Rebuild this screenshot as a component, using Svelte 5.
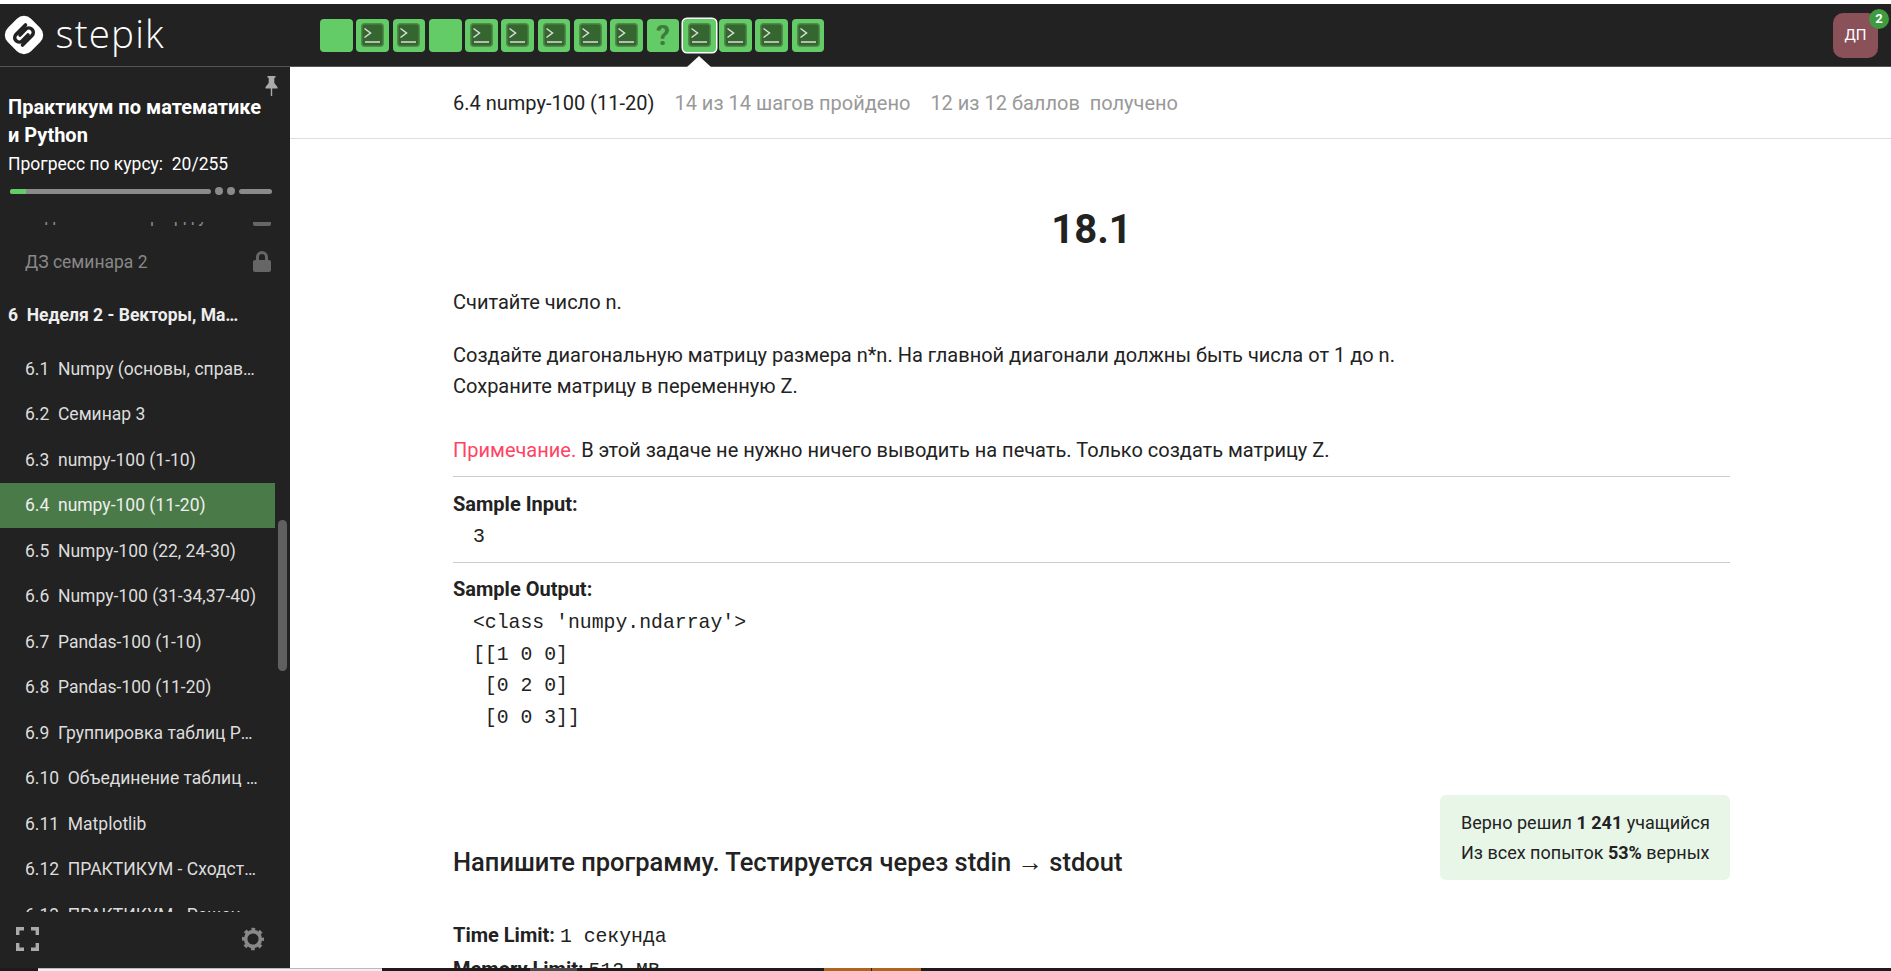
<script>
  const tabs = ['e','t','t','e','t','t','t','t','t','q','s','t','t','t'];
  const items = [
    '6.1  Numpy (основы, справочник по функциям',
    '6.2  Семинар 3',
    '6.3  numpy-100 (1-10)',
    '6.4  numpy-100 (11-20)',
    '6.5  Numpy-100 (22, 24-30)',
    '6.6  Numpy-100 (31-34,37-40)',
    '6.7  Pandas-100 (1-10)',
    '6.8  Pandas-100 (11-20)',
    '6.9  Группировка таблиц Pandas и другое',
    '6.10  Объединение таблиц и другие функции',
    '6.11  Matplotlib',
    '6.12  ПРАКТИКУМ - Сходство текстов и другое',
    '6.13  ПРАКТИКУМ - Решение задач и другое'
  ];
</script>

<div class="page">
  <div class="strip"></div>
  <header class="topbar">
    <div class="logo">
      <svg width="42" height="42" viewBox="0 0 42 42">
        <rect x="4.5" y="4.5" width="33" height="33" rx="10" transform="rotate(45 21 21)" fill="#fff"/>
        <g fill="none" stroke="#222" stroke-width="3.6" stroke-linecap="round">
          <path d="M22.5 11 L13 20.5 a4.4 4.4 0 0 0 6.4 6.2 L25 21"/>
          <path d="M19.5 31 L29 21.5 a4.4 4.4 0 0 0 -6.4 -6.2 L17 21"/>
        </g>
      </svg>
      <span class="logotext">stepik</span>
    </div>
    <div class="tabs">
      {#each tabs as t}
        <div class="tab" class:sel={t === 's'}>
          {#if t === 't' || t === 's'}
            <svg width="23" height="24" viewBox="0 0 23 24">
              <rect x="0.75" y="0.75" width="21.5" height="22.5" rx="3" fill="#35662f" stroke="#4f8b49" stroke-width="1.5"/>
              <path d="M3.5 5.5 L9.5 10 L3.5 14.5" fill="none" stroke="#dcdcdc" stroke-width="1.5"/>
              <path d="M4 19 H19" stroke="#dcdcdc" stroke-width="1.5"/>
            </svg>
          {:else if t === 'q'}
            <span class="q">?</span>
          {/if}
        </div>
      {/each}
    </div>
    <div class="caret"></div>
    <div class="avatar">ДП<span class="badge">2</span></div>
  </header>

  <div class="body">
    <aside class="side">
      <svg class="pin" width="13" height="20" viewBox="0 0 13 20">
        <path d="M2.5 0 H10.5 V1.8 H9.3 V7 L12.5 11 V12.5 H7.2 V20 H5.8 V12.5 H0.5 V11 L3.7 7 V1.8 H2.5 Z" fill="#aaa"/>
      </svg>
      <div class="course">
        <div class="ctitle">Практикум по математике и Python</div>
        <div class="cprog">Прогресс по курсу:&nbsp; 20/255</div>
        <div class="pbar">
          <div class="seg long"><div class="done"></div></div>
          <div class="dot"></div>
          <div class="dot"></div>
          <div class="seg short"></div>
        </div>
      </div>
      <div class="scroll">
        <div class="list">
          <div class="item locked ghost"><span class="txt">Задачи семинара рд у</span>
            <svg class="lock" width="18" height="21" viewBox="0 0 18 21"><path d="M3 9 V6 a6 6 0 0 1 12 0 V9 h1 a2 2 0 0 1 2 2 v8 a2 2 0 0 1 -2 2 H2 a2 2 0 0 1 -2 -2 v-8 a2 2 0 0 1 2 -2 Z M6 9 h6 V6 a3 3 0 0 0 -6 0 Z" fill="#666" fill-rule="evenodd"/></svg>
          </div>
          <div class="item locked"><span class="txt">ДЗ семинара 2</span>
            <svg class="lock" width="18" height="21" viewBox="0 0 18 21"><path d="M3 9 V6 a6 6 0 0 1 12 0 V9 h1 a2 2 0 0 1 2 2 v8 a2 2 0 0 1 -2 2 H2 a2 2 0 0 1 -2 -2 v-8 a2 2 0 0 1 2 -2 Z M6 9 h6 V6 a3 3 0 0 0 -6 0 Z" fill="#666" fill-rule="evenodd"/></svg>
          </div>
          <div class="item section"><span class="txt">6  Неделя 2 - Векторы, Матрицы и другое</span></div>
          {#each items as it, i}
            <div class="item" class:active={i === 3}><span class="txt">{it}</span></div>
          {/each}
        </div>
        <div class="thumb"></div>
      </div>
      <div class="sfoot">
        <svg width="23" height="24" viewBox="0 0 23 24" fill="none" stroke="#aaa" stroke-width="3.4">
          <path d="M1.7 8 V1.7 H8 M15 1.7 H21.3 V8 M21.3 16 V22.3 H15 M8 22.3 H1.7 V16"/>
        </svg>
        <svg width="22" height="24" viewBox="0 0 22 24" fill="none" stroke="#888">
          <circle cx="11" cy="12" r="7.4" stroke-width="3.6"/>
          <circle cx="11" cy="12" r="9.6" stroke-width="3.4" stroke-dasharray="3.6 3.94" stroke-dashoffset="1.8"/>
        </svg>
      </div>
    </aside>

    <main class="main">
      <div class="lesson">
        <span class="ltitle">6.4 numpy-100 (11-20)</span>
        <span class="lmeta">14 из 14 шагов пройдено</span>
        <span class="lmeta">12 из 12 баллов&nbsp; получено</span>
      </div>
      <article class="step">
        <h1>18.1</h1>
        <p class="p1">Считайте число n.</p>
        <p class="p2">Создайте диагональную матрицу размера n*n. На главной диагонали должны быть числа от 1 до n.<br>Сохраните матрицу в переменную Z.</p>
        <p class="p3"><span class="note">Примечание.</span> В этой задаче не нужно ничего выводить на печать. Только создать матрицу Z.</p>
        <div class="sample first">
          <div class="stitle">Sample Input:</div>
          <pre>3</pre>
        </div>
        <div class="sample">
          <div class="stitle">Sample Output:</div>
          <pre>&lt;class 'numpy.ndarray'&gt;
[[1 0 0]
 [0 2 0]
 [0 0 3]]</pre>
        </div>
        <div class="taskrow">
          <h2>Напишите программу. Тестируется через stdin → stdout</h2>
          <div class="stats">
            <div>Верно решил <b>1 241</b> учащийся</div>
            <div>Из всех попыток <b>53%</b> верных</div>
          </div>
        </div>
        <div class="limits">
          <div><b>Time Limit:</b> <code>1 секунда</code></div>
          <div><b>Memory Limit:</b> <code>512 MB</code></div>
        </div>
      </article>
    </main>
  </div>

  <footer class="taskbar">
    <div class="tb light"></div>
    <div class="tb gap1"></div>
    <div class="tb grey"></div>
    <div class="tb gap2"></div>
    <div class="tb orange"></div>
    <div class="tb orange2"></div>
  </footer>
</div>

<style>
  :global(body) { margin: 0; background: #fff; }
  .page {
    height: 971px; display: flex; flex-direction: column; overflow: hidden;
    font-family: Roboto, "Liberation Sans", sans-serif; color: #222; background: #fff;
  }
  .strip { height: 4px; background: #fff; flex: none; }
  .topbar {
    height: 63px; flex: none; background: #222; display: flex; align-items: center;
    position: relative; box-sizing: border-box; border-bottom: 1px solid #555;
  }
  .logo { width: 320px; flex: none; display: flex; align-items: center; box-sizing: border-box; padding-left: 2.5px; gap: 11px; }
  .logotext { font-family: "Open Sans", sans-serif; font-weight: 300; font-size: 38.5px; color: #fff; line-height: 42px; letter-spacing: 1.2px; margin-top: -5px; }
  .tabs { display: flex; gap: 3.6px; }
  .tab {
    width: 32.7px; height: 33px; background: #64cc66; border-radius: 4px;
    display: flex; align-items: center; justify-content: center; box-sizing: border-box; flex: none;
  }
  .tab.sel { box-shadow: 0 0 0 1.5px #fff; }
  .q { font-size: 28px; font-weight: 700; color: #3e7b3c; line-height: 33px; }
  .caret {
    position: absolute; left: 687px; bottom: -1px; width: 0; height: 0;
    border-left: 12px solid transparent; border-right: 12px solid transparent; border-bottom: 11px solid #fff;
  }
  .avatar {
    position: relative; margin-left: auto; margin-right: 13px; width: 45px; height: 45px; border-radius: 10px;
    background: #8a5159; color: #fff; font-size: 15px; display: flex; align-items: center; justify-content: center;
  }
  .badge {
    position: absolute; right: -11px; top: -4px; width: 20px; height: 20px; border-radius: 50%;
    background: #3f9b3f; color: #fff; font-size: 13px; font-weight: 700; display: flex; align-items: center; justify-content: center;
  }
  .body { flex: 1; display: flex; min-height: 0; }
  .side { width: 290px; flex: none; background: #222; display: flex; flex-direction: column; position: relative; color: #fff; }
  .pin { position: absolute; left: 265px; top: 9px; }
  .course { padding: 26px 20px 0 8px; flex: none; }
  .ctitle { font-size: 20px; font-weight: 700; line-height: 28px; color: #fff; }
  .cprog { font-size: 17.5px; line-height: 28px; color: #fff; padding-top: 1px; white-space: nowrap; }
  .pbar { margin: 10px 0 0 2px; width: 263px; height: 6px; display: flex; align-items: center; gap: 4px; margin-bottom: 27.5px; }
  .seg { background: #8a8a8a; height: 5px; border-radius: 3px; overflow: hidden; }
  .seg.long { width: 201px; }
  .seg.short { width: 33px; }
  .done { width: 16px; height: 100%; background: #64cc66; }
  .dot { width: 8px; height: 8px; border-radius: 50%; background: #8a8a8a; flex: none; }
  .scroll { flex: 1; min-height: 0; position: relative; overflow: hidden; }
  .list { margin-top: -28.15px; }
  .item {
    height: 45.5px; width: 275px; display: flex; align-items: center; box-sizing: border-box; padding-left: 25px;
    font-size: 17.5px; color: #ddd; position: relative;
  }
  .txt { white-space: pre; overflow: hidden; text-overflow: ellipsis; width: 234px; line-height: 24px; }
  .item.active { background: #4a7a48; color: #eee; }
  .item.locked { color: #888; }
  .item.section { padding-left: 8px; font-weight: 700; color: #eee; margin: 8.2px 0; }
  .item.section .txt { width: 233px; }
  .lock { position: absolute; left: 253px; top: 12px; }
  .thumb { position: absolute; left: 278px; top: 298.5px; width: 9px; height: 151px; border-radius: 5px; background: #606060; }
  .sfoot { height: 53px; flex: none; display: flex; justify-content: space-between; align-items: center; padding: 0 26px 3px 15.5px; }
  .main { flex: 1; min-width: 0; background: #fff; overflow: hidden; }
  .lesson {
    height: 72px; box-sizing: border-box; border-bottom: 1px solid #ddd; padding-left: 163px;
    display: flex; align-items: center; gap: 20px; font-size: 20px;
  }
  .ltitle { color: #222; }
  .lmeta { color: #999; }
  .step { width: 1277px; margin-left: 163px; padding-top: 67px; font-size: 20px; }
  h1 { margin: 0 0 33px; text-align: center; font-size: 40px; line-height: 48px; font-weight: 700; color: #222; }
  p { margin: 0; line-height: 31px; }
  .p1 { margin-bottom: 22px; }
  .p2 { margin-bottom: 33px; }
  .p3 { margin-bottom: 10px; }
  .note { color: #ff4363; }
  .sample { border-top: 1px solid #ccc; padding-top: 11px; margin-bottom: 10px; }
  .sample.first { padding-top: 12px; margin-bottom: 8px; }
  .sample.first pre { margin-top: 2px; }
  .sample pre { margin-top: 3.5px; }
  .stitle { font-weight: 700; line-height: 31px; color: #222; font-size: 20px; }
  pre {
    margin: 0; padding-left: 20px; font-family: "Liberation Mono", monospace; font-size: 19.8px;
    line-height: 31.6px; color: #222;
  }
  .taskrow { display: flex; justify-content: space-between; align-items: flex-end; margin-top: 61px; }
  h2 { margin: 0; font-size: 25.5px; line-height: 36px; font-weight: 500; color: #222; }
  .stats {
    width: 290px; height: 85px; box-sizing: border-box; background: #e8f6e8; border-radius: 6px; padding: 13px 0 0 21px;
    font-size: 18px; line-height: 30px; color: #222;
  }
  .limits { margin-top: 39px; line-height: 32px; }
  .limits b { font-size: 20px; }
  code { font-family: "Liberation Mono", monospace; font-size: 19.8px; }
  .taskbar { height: 3px; flex: none; display: flex; background: #1c1c1c; }
  .tb { height: 3px; box-sizing: border-box; }
  .light { margin-left: 38px; width: 344px; background: #efefef; border-top: 1px solid #bbb; }
  .gap1 { width: 148px; }
  .grey { width: 47px; background: #4a4a4a; }
  .gap2 { width: 247px; }
  .orange { width: 48px; background: #b06420; border-right: 1px solid #222; }
  .orange2 { width: 49px; background: #b06420; }
</style>
